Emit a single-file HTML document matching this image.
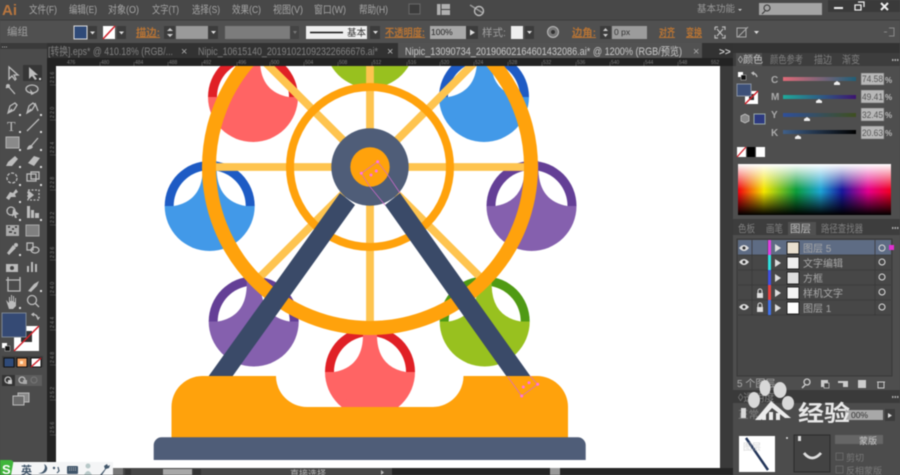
<!DOCTYPE html>
<html><head><meta charset="utf-8"><style>
html,body{margin:0;padding:0;background:#4a4a4a;width:900px;height:475px;overflow:hidden}
svg{display:block}
#root{filter:blur(.5px)}
text{font-family:"Liberation Sans","Noto Sans CJK SC",sans-serif}
.m{font-size:10.5px;fill:#a6a6a6}
.o{font-size:10.5px;fill:#b87434;font-weight:bold;text-decoration:underline}
.t{font-size:10.5px;fill:#a0a0a0}
.r{font-size:5px;fill:#7a7a7a}
.p{font-size:10.5px;fill:#7f7f7f}
.l{font-size:10px;fill:#a8a8a8}
.ic{fill:none;stroke:#bcbcbc;stroke-width:1.3}
.if{fill:#bcbcbc}
</style></head><body>
<svg id="root" width="900" height="475" viewBox="0 0 900 475" xmlns="http://www.w3.org/2000/svg">
<defs>
<g id="g">
<path d="M-45,0A45,45 0 0 1 45,0Z" style="fill:var(--d)"/>
<path d="M-45,0A45,45 0 0 0 45,0Z" style="fill:var(--l)"/>
<circle r="36" style="fill:var(--l)"/>
<rect x="-7" y="-45" width="14" height="45" style="fill:var(--l)"/>
<path d="M-36,0A36,36 0 0 1 -7,-35.3Q-8,-5 -36,0Z" fill="#fff"/>
<path d="M36,0A36,36 0 0 0 7,-35.3Q8,-5 36,0Z" fill="#fff"/>
</g>
<linearGradient id="sh"><stop offset="0" stop-color="#f00010"/><stop offset=".17" stop-color="#f4e600"/><stop offset=".38" stop-color="#0c9c3c"/><stop offset=".54" stop-color="#1ea4d4"/><stop offset=".68" stop-color="#18189a"/><stop offset=".85" stop-color="#e4008c"/><stop offset="1" stop-color="#f00020"/></linearGradient>
<linearGradient id="sv" x1="0" y1="0" x2="0" y2="1"><stop offset="0" stop-color="#fff"/><stop offset=".5" stop-color="#fff" stop-opacity="0"/><stop offset=".55" stop-color="#000" stop-opacity="0"/><stop offset="1" stop-color="#000"/></linearGradient>
<linearGradient id="c1"><stop offset="0" stop-color="#e06a78"/><stop offset="1" stop-color="#1f5f78"/></linearGradient>
<linearGradient id="c2"><stop offset="0" stop-color="#1ea99a"/><stop offset="1" stop-color="#3d1470"/></linearGradient>
<linearGradient id="c3"><stop offset="0" stop-color="#2f4f9a"/><stop offset="1" stop-color="#3f4f20"/></linearGradient>
<linearGradient id="c4"><stop offset="0" stop-color="#3f5f88"/><stop offset="1" stop-color="#000"/></linearGradient>
</defs>

<rect width="900" height="475" fill="#4a4a4a"/>
<rect x="47" y="58" width="690" height="417" fill="#222"/>

<!-- canvas -->
<rect x="56" y="66" width="664" height="402" fill="#fff"/>
<svg x="56" y="60" width="664" height="408" viewBox="56 60 664 408">
<use href="#g" x="370" y="43" style="--l:#98c11f;--d:#4f9a14"/>
<use href="#g" x="253" y="97" style="--l:#ff6464;--d:#e02026"/>
<use href="#g" x="484" y="97" style="--l:#4299e8;--d:#1e5bc4"/>
<use href="#g" x="209.7" y="206" style="--l:#4299e8;--d:#1e5bc4"/>
<use href="#g" x="531.5" y="206" style="--l:#8560ae;--d:#643f96"/>
<use href="#g" x="253.7" y="321.5" style="--l:#8560ae;--d:#643f96"/>
<use href="#g" x="484.7" y="321.5" style="--l:#98c11f;--d:#4f9a14"/>
<use href="#g" x="370" y="372" style="--l:#ff6464;--d:#e02026"/>
<g stroke="#fec44f" stroke-width="7.8">
<line x1="370" y1="0" x2="370" y2="330"/>
<line x1="205" y1="167" x2="535" y2="167"/>
<line x1="255" y1="52" x2="485" y2="282"/>
<line x1="485" y1="52" x2="255" y2="282"/>
</g>
<circle cx="370" cy="167" r="80" fill="none" stroke="#ffa20c" stroke-width="8"/>
<circle cx="370" cy="167" r="161" fill="none" stroke="#ffa20c" stroke-width="14"/>
<polygon points="340,193 355,205 232,377 208,377" fill="#3a4a68"/>
<polygon points="400,193 385,205 507,377 531,377" fill="#3a4a68"/>
<circle cx="370" cy="167" r="38.7" fill="#4f5d78"/>
<circle cx="370" cy="167" r="19.7" fill="#ffa20c"/>
<path d="M171.5,437.5V407A31,31 0 0 1 202,376H276A31,31 0 0 0 307,407H433A31,31 0 0 0 463.5,376H537A31,31 0 0 1 568,407V437.5Z" fill="#ffa20c"/>
<path d="M153.7,460V445A8,8 0 0 1 161.7,437.3H577.7A8,8 0 0 1 585.7,445V460Z" fill="#4f5d78"/>
<g fill="none" stroke="#d56ad0" stroke-width=".7">
<path d="M361.3,173.3L377.7,161.7L386.7,173.3L400,193M361.3,173.3L370,186.7L385,205"/>
<path d="M507.7,376.7L521.7,396L537.7,384.3L530,376"/>
</g>
<g fill="#ff70e8">
<circle cx="377.7" cy="161.7" r="1.5"/><circle cx="361.3" cy="173.3" r="1.5"/><circle cx="371" cy="175" r="1.5"/><circle cx="376.3" cy="171" r="1.5"/>
<circle cx="521.7" cy="396" r="1.5"/><circle cx="537.7" cy="384.3" r="1.5"/><circle cx="523.3" cy="387" r="1.5"/><circle cx="529" cy="382.7" r="1.5"/>
</g>
</svg>

<rect x="720" y="58" width="13" height="417" fill="#3a3a3a"/>
<path d="M722,65l4,-4l4,4z" fill="#ddd"/>

<!-- rulers -->
<rect x="47" y="58" width="686" height="8" fill="#232323"/>
<rect x="47" y="58" width="9" height="410" fill="#232323"/>
<g class="r">
<text x="67" y="64" class="r">476</text><text x="101" y="64" class="r">480</text><text x="135" y="64" class="r">484</text><text x="169" y="64" class="r">488</text><text x="203" y="64" class="r">492</text><text x="238" y="64" class="r">496</text><text x="271" y="64" class="r">500</text><text x="305" y="64" class="r">504</text><text x="339" y="64" class="r">508</text><text x="373" y="64" class="r">512</text><text x="408" y="64" class="r">516</text><text x="441" y="64" class="r">520</text><text x="475" y="64" class="r">524</text><text x="509" y="64" class="r">528</text><text x="543" y="64" class="r">532</text><text x="577" y="64" class="r">536</text><text x="611" y="64" class="r">540</text><text x="645" y="64" class="r">544</text><text x="679" y="64" class="r">548</text><text x="711" y="64" class="r">552</text>
</g>
<g stroke="#666" stroke-width=".6">
<path d="M50,85h6M50,120h6M50,155h6M50,190h6M50,225h6M50,260h6M50,295h6M50,330h6M50,365h6M50,400h6M50,435h6"/>
<path d="M100,62v4M134,62v4M168,62v4M202,62v4M237,62v4M270,62v4M304,62v4M338,62v4M372,62v4M407,62v4M440,62v4M474,62v4M508,62v4M542,62v4M576,62v4M610,62v4M644,62v4M678,62v4"/>
</g>
<g><text transform="translate(54,83) rotate(-90)" class="r">2 1 6</text><text transform="translate(54,118) rotate(-90)" class="r">2 2 0</text><text transform="translate(54,153) rotate(-90)" class="r">2 2 4</text><text transform="translate(54,188) rotate(-90)" class="r">2 2 8</text><text transform="translate(54,223) rotate(-90)" class="r">2 3 2</text><text transform="translate(54,258) rotate(-90)" class="r">2 3 6</text><text transform="translate(54,293) rotate(-90)" class="r">2 4 0</text><text transform="translate(54,328) rotate(-90)" class="r">2 4 4</text><text transform="translate(54,363) rotate(-90)" class="r">2 4 8</text><text transform="translate(54,398) rotate(-90)" class="r">2 5 2</text><text transform="translate(54,433) rotate(-90)" class="r">2 5 6</text></g>

<!-- menu bar -->
<rect width="900" height="20" fill="#484848"/>
<text x="2" y="15" font-size="15" font-weight="bold" fill="#b9763f">Ai</text>
<g lengthAdjust="spacingAndGlyphs">
<text x="29" y="13" class="m" textLength="28" lengthAdjust="spacingAndGlyphs">文件(F)</text>
<text x="69" y="13" class="m" textLength="28" lengthAdjust="spacingAndGlyphs">编辑(E)</text>
<text x="108" y="13" class="m" textLength="31" lengthAdjust="spacingAndGlyphs">对象(O)</text>
<text x="152" y="13" class="m" textLength="27" lengthAdjust="spacingAndGlyphs">文字(T)</text>
<text x="192" y="13" class="m" textLength="28" lengthAdjust="spacingAndGlyphs">选择(S)</text>
<text x="232" y="13" class="m" textLength="29" lengthAdjust="spacingAndGlyphs">效果(C)</text>
<text x="273" y="13" class="m" textLength="30" lengthAdjust="spacingAndGlyphs">视图(V)</text>
<text x="314" y="13" class="m" textLength="32" lengthAdjust="spacingAndGlyphs">窗口(W)</text>
<text x="359" y="13" class="m" textLength="29" lengthAdjust="spacingAndGlyphs">帮助(H)</text>
</g>
<rect x="409" y="4" width="11" height="10" fill="#3c3c3c" stroke="#686868"/>
<rect x="437" y="4" width="13" height="11" fill="#b0b0b0"/><path d="M441,4v11M441,9.5h9" stroke="#444"/>
<path d="M470,5l13,8" stroke="#999" stroke-width="1.5"/><circle cx="479" cy="11" r="4.5" fill="none" stroke="#bbb" stroke-width="1.4"/>
<text x="697" y="12" font-size="9.5" fill="#999">基本功能</text><path d="M738,9h4l-2,2z" fill="#ccc"/>
<rect x="759" y="3" width="63" height="12" fill="#a4a4a4"/><circle cx="767" cy="8" r="3" fill="none" stroke="#333"/><path d="M765,11l-3,3" stroke="#333"/>
<rect x="828" y="0" width="72" height="12" fill="#3a3a3a"/>
<path d="M834,8h9" stroke="#eee" stroke-width="2"/>
<path d="M855,5h6v5h-6zM858,2h6v5" fill="none" stroke="#eee" stroke-width="1.3"/>
<path d="M881,3l7,7M888,3l-7,7" stroke="#eee" stroke-width="2"/>

<!-- options bar -->
<rect y="20" width="900" height="23" fill="#505050"/>
<path d="M0,20h900" stroke="#3c3c3c"/>
<text x="7" y="35" class="t" font-size="10">编组</text>
<rect x="74" y="26" width="13" height="13" fill="#2f4a78" stroke="#ddd"/>
<rect x="88" y="26" width="9" height="13" fill="#3c3c3c"/><path d="M90,31.5h5l-2.5,3z" fill="#ddd"/>
<rect x="103" y="26" width="12" height="13" fill="#fff"/><path d="M103,39L115,26" stroke="#d0202a" stroke-width="1.5"/>
<rect x="117" y="26" width="9" height="13" fill="#3c3c3c"/><path d="M119,31.5h5l-2.5,3z" fill="#ddd"/>
<text x="136" y="36" class="o" textLength="24" lengthAdjust="spacingAndGlyphs">描边:</text>
<rect x="164" y="26" width="11" height="13" fill="#3c3c3c"/><path d="M167,31l3,-3l3,3zM167,34l3,3l3,-3z" fill="#ccc"/>
<rect x="176" y="26" width="32" height="13" fill="#9a9a9a"/>
<rect x="208" y="26" width="10" height="13" fill="#3c3c3c"/><path d="M211,31h5l-2.5,3z" fill="#ddd"/>
<rect x="225" y="26" width="65" height="13" fill="#7c7c7c"/>
<rect x="290" y="26" width="9" height="13" fill="#444"/><path d="M293,31h4l-2,3z" fill="#777"/>
<rect x="306" y="26" width="61" height="13" fill="#eee"/><path d="M310,32.5h33" stroke="#111" stroke-width="1.6"/><text x="347" y="36" font-size="9.5" fill="#333">基本</text>
<rect x="370" y="26" width="10" height="13" fill="#3c3c3c"/><path d="M373,31h5l-2.5,3z" fill="#ddd"/>
<text x="385" y="36" class="o" textLength="40" lengthAdjust="spacingAndGlyphs">不透明度:</text>
<rect x="430" y="26" width="36" height="13" fill="#a8a8a8"/><text x="431" y="35" font-size="8.5" fill="#222">100%</text>
<rect x="466" y="26" width="12" height="13" fill="#3c3c3c"/><path d="M470,29.5l5,3l-5,3z" fill="#ddd"/>
<text x="482" y="36" class="t">样式:</text>
<rect x="511" y="26" width="12" height="13" fill="#eee"/>
<rect x="525" y="26" width="9" height="13" fill="#3c3c3c"/><path d="M527,31h5l-2.5,3z" fill="#ddd"/>
<circle cx="553" cy="32" r="5.5" fill="#777" stroke="#bbb"/><circle cx="553" cy="32" r="2" fill="#333"/>
<text x="572" y="36" class="o" textLength="24" lengthAdjust="spacingAndGlyphs">边角:</text>
<rect x="600" y="26" width="11" height="13" fill="#3c3c3c"/><path d="M603,31l2.5,-3l2.5,3zM603,34l2.5,3l2.5,-3z" fill="#ccc"/>
<rect x="612" y="26" width="35" height="13" fill="#9c9c9c"/><text x="614" y="35" font-size="8.5" fill="#333">0 px</text>
<text x="659" y="36" class="o" textLength="16" lengthAdjust="spacingAndGlyphs">对齐</text><text x="686" y="36" class="o" textLength="16" lengthAdjust="spacingAndGlyphs">变换</text>
<path d="M715,27h3M722,27h3v3M725,35v3h-3M718,38h-3v-3M715,30v-3M717,29l6,7M723,29l-6,7" fill="none" stroke="#bbb" stroke-width="1.2"/>
<path d="M737,28h9v9h-9zM738,37l10,-10" fill="none" stroke="#aaa"/><path d="M754,31h5l-2.5,3z" fill="#ddd"/>
<path d="M884,32h3M889,28h5v8h-5" fill="none" stroke="#888"/>

<!-- tabs -->
<rect x="47" y="43" width="686" height="15" fill="#323232"/>
<rect x="398" y="43" width="304" height="15" fill="#525252"/>
<text x="48" y="55" font-size="11" fill="#808080" textLength="125" lengthAdjust="spacingAndGlyphs">[转换].eps* @ 410.18% (RGB/...</text><text x="181" y="55" font-size="11" fill="#aaa">×</text>
<text x="198" y="55" font-size="11" fill="#808080" textLength="180" lengthAdjust="spacingAndGlyphs">Nipic_10615140_20191021092322666676.ai*</text><text x="387" y="55" font-size="11" fill="#bbb">×</text>
<text x="405" y="55" font-size="11" fill="#c8c8c8" textLength="277" lengthAdjust="spacingAndGlyphs">Nipic_13090734_20190602164601432086.ai* @ 1200% (RGB/预览)</text><text x="693" y="55" font-size="11" fill="#aaa">×</text>
<text x="719" y="55" font-size="10" fill="#ccc" font-weight="bold">&gt;&gt;</text>

<!-- toolbox -->
<rect x="0" y="43" width="47" height="432" fill="#4b4b4b"/>
<rect x="0" y="43" width="47" height="6" fill="#3a3a3a"/>
<path d="M2,47h5" stroke="#aaa" stroke-dasharray="1 1"/>
<rect x="23" y="65" width="19" height="16" fill="#363636"/>
<g>
<path class="ic" d="M9,67V79L12,76L15,80L16,79L14,75H18Z"/>
<path class="if" d="M29,67V79L32,76L35,80L37,79L34,75H38Z"/>
<path class="ic" d="M8,86l7,8M6,88l3,-3" /><circle class="if" cx="8" cy="86" r="2"/>
<ellipse class="ic" cx="32" cy="89" rx="6" ry="4"/><path class="if" d="M30,89l4,5l-3,1z"/>
<path class="ic" d="M8,113l2,-7l5,-3l2,2l-3,5zM8,113l4,-4"/>
<path class="ic" d="M27,113l2,-7l4,-3l2,2l-3,5zM27,113l4,-4M35,103l3,8"/>
<text x="7" y="131" font-size="14" fill="#bcbcbc" style="font-family:'Liberation Serif',serif">T</text>
<path class="ic" d="M27,131l12,-12"/>
<rect x="6" y="137" width="13" height="11" fill="#8a8a8a" stroke="#b4b4b4"/>
<path class="ic" d="M27,149c3,0 4,-2 5,-4l6,-7"/><path class="if" d="M27,149q1,-4 4,-4l2,2q-2,3 -6,2z"/>
<path class="if" d="M6,166l2,-4l7,-6l3,3l-6,7z"/>
<path class="if" d="M28,163l6,-7l6,2l-6,8z"/>
<circle class="ic" cx="12" cy="178" r="5" stroke-dasharray="3 1.5"/>
<rect class="ic" x="27" y="174" width="9" height="7"/><rect class="ic" x="31" y="172" width="8" height="7"/>
<path class="if" d="M6,198l4,-6l3,1l3,-4l2,3l-3,2l1,3l-5,0l-2,3z"/>
<path class="ic" stroke-dasharray="2 1.5" d="M28,190h11v10h-11z"/><path class="if" d="M28,190l6,5l-6,5z"/>
<circle class="ic" cx="11" cy="211" r="4"/><path class="if" d="M13,209l6,5l-3,1l1,3l-2,0l-1,-3l-2,2z"/>
<path class="if" d="M27,206h3v12h-3zM31,210h3v8h-3zM35,213h4v5h-4z"/>
<rect x="6" y="225" width="13" height="11" fill="#aaa"/><path d="M8,227h2M12,229h2M9,232h3M14,233h2M15,227h2" stroke="#333" stroke-width="1.5"/>
<rect x="26" y="225" width="13" height="11" fill="#808080" stroke="#aaa"/>
<path class="if" d="M7,253l6,-8l3,3l-7,7z"/><circle class="if" cx="16" cy="245" r="2"/>
<rect class="ic" x="27" y="243" width="6" height="7"/><ellipse class="ic" cx="35" cy="250" rx="4" ry="3"/>
<path class="if" d="M6,264h12v8h-12z"/><circle cx="12" cy="268" r="2" fill="#444"/>
<path class="if" d="M27,272v-6h2v6zM31,272v-10h2v10zM35,272v-8h2v8z"/>
<path class="ic" d="M6,280h14M8,277v14h12v-14"/>
<path class="if" d="M28,291l6,-7l5,-3l-2,5l-6,6z"/>
<path class="if" d="M6,300l3,3v-6h1v4h1v-6h1v6h1v-5h1v6h1v-4h1v8l-3,3h-4z"/>
<circle class="ic" cx="32" cy="300" r="4.5" stroke-width="1.8"/><path class="ic" d="M35,303l4,4" stroke-width="2"/>
<g fill="#ddd"><rect x="39" y="78" width="2" height="2"/><rect x="19" y="114" width="2" height="2"/><rect x="40" y="114" width="2" height="2"/><rect x="19" y="131" width="2" height="2"/><rect x="40" y="131" width="2" height="2"/><rect x="19" y="149" width="2" height="2"/><rect x="40" y="149" width="2" height="2"/><rect x="19" y="166" width="2" height="2"/><rect x="40" y="166" width="2" height="2"/><rect x="19" y="184" width="2" height="2"/><rect x="40" y="184" width="2" height="2"/><rect x="19" y="201" width="2" height="2"/><rect x="19" y="219" width="2" height="2"/><rect x="40" y="219" width="2" height="2"/><rect x="19" y="254" width="2" height="2"/><rect x="40" y="290" width="2" height="2"/><rect x="19" y="307" width="2" height="2"/></g>
</g>
<!-- fill / stroke -->
<rect x="14" y="326" width="25" height="25" fill="#fff"/><rect x="21" y="331" width="11" height="11" fill="#333"/>
<rect x="2" y="313" width="24" height="24" fill="#354a74" stroke="#7c8594"/>
<path d="M14,351L39,326" stroke="#d0202a" stroke-width="1.5"/>
<path class="ic" d="M32,314q5,0 6,5M34,313l-2,1.5l2,1.5M37,317l1,2l1.5,-2"/>
<rect x="2" y="343" width="5" height="5" fill="#fff"/><rect x="5" y="346" width="5" height="5" fill="#111" stroke="#ccc" stroke-width=".5"/>
<rect x="2" y="356" width="41" height="11" fill="#3c3c3c"/>
<rect x="4" y="358" width="10" height="9" fill="#2f4a78" stroke="#111"/>
<rect x="17" y="358" width="10" height="9" fill="#f2a060" stroke="#111"/><rect x="20" y="361" width="3" height="3" fill="#ffe8c8"/>
<rect x="31" y="358" width="10" height="9" fill="#fff" stroke="#111"/><path d="M31,367l10,-9" stroke="#d0202a" stroke-width="1.5"/>
<rect x="2" y="375" width="13" height="11" fill="#333"/><rect x="15" y="375" width="27" height="11" fill="#5d5d5d"/>
<circle class="ic" cx="8" cy="380" r="3"/><rect x="8" y="380" width="4" height="4" fill="#ccc"/>
<circle class="ic" cx="22" cy="380" r="3"/><rect x="23" y="380" width="4" height="4" fill="#aaa"/>
<circle cx="34" cy="380" r="3" fill="none" stroke="#777"/>
<rect x="18" y="393" width="11" height="9" fill="#888" stroke="#bbb"/><rect x="13" y="396" width="11" height="9" fill="#6b6b6b" stroke="#bbb"/>

<!-- status bar -->
<rect x="47" y="468" width="345" height="7" fill="#474747"/>
<rect x="113" y="468" width="10" height="7" fill="#777"/><rect x="125" y="469" width="6" height="6" fill="#333"/>
<rect x="163" y="469" width="29" height="6" fill="#a8a8a8"/><rect x="193" y="469" width="8" height="6" fill="#333"/>
<text x="290" y="477" font-size="9" fill="#bbb">直接选择</text>
<path d="M381,470l3,2.500l-3,2.500z" fill="#bbb"/>
<rect x="392" y="468" width="341" height="7" fill="#252525"/>
<rect x="550" y="468" width="10" height="7" fill="#999"/>

<!-- right panels -->
<rect x="733" y="43" width="167" height="432" fill="#4e4e4e"/>
<rect x="733" y="43" width="167" height="10" fill="#333"/>
<rect x="733" y="53" width="167" height="13" fill="#3d3d3d"/>
<rect x="736" y="53" width="26" height="13" fill="#505050"/>
<text x="738" y="63" font-size="10" fill="#c4c4c4">◊颜色</text>
<text x="770" y="63" class="p" textLength="33" lengthAdjust="spacingAndGlyphs">颜色参考</text><text x="814" y="63" class="p" textLength="18" lengthAdjust="spacingAndGlyphs">描边</text><text x="842" y="63" class="p" textLength="18" lengthAdjust="spacingAndGlyphs">渐变</text>
<path d="M892,60h7" stroke="#aaa" stroke-width="2" stroke-dasharray="1.500 1"/>
<!-- colour panel -->
<rect x="738" y="72" width="5" height="5" fill="#fff"/><rect x="741" y="75" width="5" height="5" fill="#111" stroke="#ccc" stroke-width=".5"/>
<path class="ic" d="M752,73q4,0 5,4M754,72l-2,1l2,2"/>
<rect x="745" y="91" width="13" height="13" fill="#fff"/><rect x="749" y="94" width="5" height="6" fill="#333"/>
<rect x="737" y="84" width="14" height="12" fill="#3d5078" stroke="#8a93a3"/>
<path d="M745,104L758,91" stroke="#d0202a" stroke-width="1.5"/>
<path d="M741,116l4,-2l4,2v5l-4,2l-4,-2z" fill="#888" stroke="#ccc" stroke-width=".7"/>
<rect x="754" y="114" width="11" height="10" fill="#2d3a80" stroke="#9aa"/>
<text x="771" y="83" font-size="10" font-weight="bold" fill="#aaa">C</text><text x="771" y="100" font-size="10" font-weight="bold" fill="#aaa">M</text><text x="771" y="118" font-size="10" font-weight="bold" fill="#aaa">Y</text><text x="771" y="136" font-size="10" font-weight="bold" fill="#aaa">K</text>
<rect x="783" y="77" width="73" height="4" fill="url(#c1)"/><rect x="783" y="95" width="73" height="4" fill="url(#c2)"/><rect x="783" y="113" width="73" height="4" fill="url(#c3)"/><rect x="783" y="130" width="73" height="4" fill="url(#c4)"/>
<g fill="#eee"><path d="M834,85v-2l3,-2l3,2v2z"/><path d="M816,103v-2l3,-2l3,2v2z"/><path d="M804,121v-2l3,-2l3,2v2z"/><path d="M795,139v-2l3,-2l3,2v2z"/></g>
<g fill="#b8b8b8" stroke="#666" stroke-width=".5"><rect x="861" y="73" width="23" height="12"/><rect x="861" y="90" width="23" height="13"/><rect x="861" y="108" width="23" height="13"/><rect x="861" y="126" width="23" height="13"/></g>
<g font-size="9" fill="#555"><text x="862" y="82" textLength="21" lengthAdjust="spacingAndGlyphs">74.58</text><text x="862" y="100" textLength="21" lengthAdjust="spacingAndGlyphs">49.41</text><text x="862" y="118" textLength="21" lengthAdjust="spacingAndGlyphs">32.45</text><text x="862" y="136" textLength="21" lengthAdjust="spacingAndGlyphs">20.63</text></g>
<g font-size="8" fill="#bbb" font-weight="bold"><text x="885" y="83">%</text><text x="885" y="100">%</text><text x="885" y="118">%</text><text x="885" y="136">%</text></g>
<rect x="737" y="147" width="9" height="10" fill="#fff"/><path d="M737,157l9,-10" stroke="#d0202a" stroke-width="1.3"/><rect x="747" y="147" width="8" height="10" fill="#000"/><rect x="756" y="147" width="9" height="10" fill="#fff"/>
<rect x="738" y="164" width="153" height="51" fill="url(#sh)"/><rect x="738" y="164" width="153" height="51" fill="url(#sv)"/>

<!-- layers panel -->
<rect x="733" y="219" width="167" height="16" fill="#3d3d3d"/>
<rect x="788" y="222" width="28" height="13" fill="#505050"/>
<text x="738" y="232" class="p" textLength="17" lengthAdjust="spacingAndGlyphs">色板</text><text x="766" y="232" class="p" textLength="17" lengthAdjust="spacingAndGlyphs">画笔</text><text x="790" y="232" font-size="10.5" fill="#c0c0c0">图层</text><text x="821" y="232" class="p" textLength="42" lengthAdjust="spacingAndGlyphs">路径查找器</text>
<path d="M892,228h7" stroke="#aaa" stroke-width="2" stroke-dasharray="1.500 1"/>
<rect x="737" y="239" width="155" height="137" fill="#474747" stroke="#393939"/>
<rect x="738" y="240" width="153" height="15" fill="#5e6c84"/>
<g stroke="#383838" stroke-width=".8"><path d="M738,255h153M738,270h153M738,285h153M738,300h153M738,315h153M752,240v75M768,240v75M875,240v75"/></g>
<rect x="768" y="240" width="3" height="15" fill="#e040e0"/><rect x="768" y="255" width="3" height="15" fill="#30e0e0"/><rect x="768" y="270" width="3" height="15" fill="#4050e0"/><rect x="768" y="285" width="3" height="15" fill="#e84040"/><rect x="768" y="300" width="3" height="15" fill="#4070e8"/>
<g fill="#ddd"><path d="M775,244l6,4l-6,4z"/><path d="M775,259l6,4l-6,4z"/><path d="M775,274l6,4l-6,4z"/><path d="M775,289l6,4l-6,4z"/><path d="M775,304l6,4l-6,4z"/></g>
<rect x="787" y="242" width="12" height="12" fill="#e8dfcf" stroke="#222"/><rect x="787" y="257" width="12" height="12" fill="#eee" stroke="#222"/><rect x="787" y="272" width="12" height="12" fill="#ddd" stroke="#222"/><rect x="787" y="287" width="12" height="12" fill="#f4f4f4" stroke="#222"/><rect x="787" y="302" width="12" height="12" fill="#fff" stroke="#222"/>
<g><text x="803" y="252" class="l">图层 5</text><text x="803" y="267" class="l">文字编辑</text><text x="803" y="282" class="l">方框</text><text x="803" y="297" class="l">样机文字</text><text x="803" y="312" class="l">图层 1</text></g>
<g fill="#ddd"><path d="M739,248q5,-6 10,0q-5,6 -10,0z"/><path d="M739,262q5,-6 10,0q-5,6 -10,0z"/><path d="M739,307q5,-6 10,0q-5,6 -10,0z"/></g>
<g fill="#333"><circle cx="744" cy="248" r="1.500"/><circle cx="744" cy="262" r="1.500"/><circle cx="744" cy="307" r="1.500"/></g>
<g fill="#ddd"><rect x="757" y="293" width="6" height="5"/><rect x="757" y="307" width="6" height="5"/></g><path d="M758,293v-2a2,2 0 0 1 4,0v2M758,307v-2a2,2 0 0 1 4,0v2" fill="none" stroke="#ddd"/>
<g fill="none" stroke="#ddd" stroke-width="1"><circle cx="882" cy="248" r="3"/><circle cx="882" cy="262" r="3"/><circle cx="882" cy="277" r="3"/><circle cx="882" cy="292" r="3"/><circle cx="882" cy="307" r="3"/></g>
<rect x="889" y="245" width="5" height="5" fill="#e030d0"/>
<text x="737" y="387" font-size="10" fill="#aaa">5 个图层</text>
<circle cx="807" cy="382" r="3" fill="none" stroke="#ccc" stroke-width="1.300"/><path d="M805,385l-3,3" stroke="#ccc" stroke-width="1.500"/>
<rect x="821" y="380" width="7" height="7" fill="#ccc"/><rect x="824" y="383" width="5" height="5" fill="#444" stroke="#ccc" stroke-width=".7"/>
<path d="M838,381h10v6h-5v-4h-5z" fill="#ccc"/>
<rect x="858" y="380" width="8" height="8" fill="#ccc"/>
<path d="M877,382h8M878,382v6h6v-6" fill="none" stroke="#ccc"/>

<!-- transparency panel -->
<rect x="733" y="390" width="167" height="85" fill="#4c4c4c"/>
<rect x="733" y="390" width="167" height="13" fill="#3a3a3a"/>
<text x="738" y="401" class="p">◊透明度</text>
<path d="M892,397h7" stroke="#aaa" stroke-width="2" stroke-dasharray="1.500 1"/>
<text x="738" y="418" class="p" font-size="9">正常</text>
<rect x="845" y="410" width="38" height="10" fill="#a8a8a8"/><text x="851" y="418" font-size="8.5" fill="#333">00%</text>
<rect x="885" y="409" width="10" height="12" fill="#3c3c3c"/><path d="M888,413l4,2.500l-4,2.500z" fill="#ddd"/>
<rect x="739" y="436" width="36" height="36" fill="#fff"/><path d="M746,438L768,470" stroke="#24365a" stroke-width="2.500"/>
<text x="743" y="450" font-size="9" fill="#bbb" opacity=".6">图层</text>
<circle cx="787" cy="438" r="1" fill="#ddd"/>
<rect x="794" y="435" width="36" height="37" fill="#434343" stroke="#2c2c2c"/>
<rect x="798" y="436" width="3" height="5" fill="#ddd"/>
<path d="M804,453q8,10 17,0" fill="none" stroke="#ddd" stroke-width="2.800"/>
<rect x="835" y="435" width="48" height="9" fill="#666"/><text x="859" y="444" font-size="9" fill="#ccc">蒙版</text>
<rect x="836" y="453" width="7" height="7" fill="none" stroke="#666"/><text x="846" y="461" font-size="9" fill="#7a7a7a">剪切</text>
<rect x="836" y="466" width="7" height="7" fill="none" stroke="#666"/><text x="846" y="474" font-size="9" fill="#7a7a7a">反相蒙版</text>

<!-- watermark -->
<g fill="#d8d8d8">
<ellipse cx="765" cy="388" rx="5.500" ry="8"/><ellipse cx="780" cy="390" rx="6.500" ry="8"/><ellipse cx="788" cy="403" rx="6" ry="7"/><ellipse cx="754" cy="400" rx="6" ry="8"/>
<rect x="741" y="408" width="5" height="10"/>
<path d="M755,420L771,401L791,418H785L772,408L761,420Z" fill="#ececec"/>
<rect x="762" y="412" width="4" height="8" fill="#ececec"/><rect x="769" y="412" width="4" height="8" fill="#ececec"/><rect x="776" y="413" width="4" height="7" fill="#ececec"/>
</g>
<text x="798" y="421" font-size="22" font-weight="bold" fill="#e8e8e8" textLength="52" lengthAdjust="spacingAndGlyphs">经验</text>

<!-- IME bar -->
<rect x="0" y="462" width="113" height="13" fill="#f4f5f6"/>
<path d="M0,460h10q4,0 3,4l-2,11H0z" fill="#3fb53a"/>
<text x="2" y="474" font-size="13" font-weight="bold" fill="#fff">S</text>
<text x="21" y="474" font-size="11" font-weight="bold" fill="#41566a">英</text>
<path d="M44,464a6,6 0 0 1 -6,9a6,5 0 0 0 6,-9z" fill="#41566a"/>
<circle cx="54" cy="468" r="1.200" fill="#41566a"/><path d="M58,467l1,4l-2,2" fill="none" stroke="#41566a" stroke-width="1.200"/>
<rect x="67" y="466" width="11" height="8" rx="1" fill="#41566a"/><path d="M69,468h7M69,470h7" stroke="#ddd" stroke-width=".8" stroke-dasharray="1 1"/>
<circle cx="88" cy="466" r="2.500" fill="#b7c8c8"/><path d="M84,475q4,-8 8,0z" fill="#b7c8c8"/>
<path d="M100,475l5,-6l-1,-3l3,-2l1,2l2,-1l-1,3l-3,1l-4,6z" fill="#41566a"/>
</svg>
</body></html>
